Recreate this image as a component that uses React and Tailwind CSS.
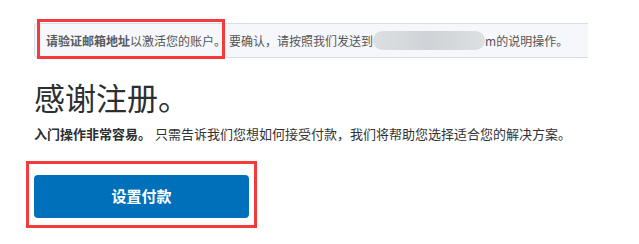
export default function App() {
  return (
    <div
      className="min-h-[244px] w-[639px] bg-white pl-[34px] pt-[23px] text-[#2c2e2f]"
      style={{ fontFamily: '"Noto Sans CJK SC", "Noto Sans", sans-serif' }}
    >
      {/* notice bar */}
      <div className="relative w-[554px]">
        <div className="flex h-[35px] items-center rounded-l-[4px] border border-r-0 border-[#d2e0ea] bg-[#f5f7fa] pl-[11px] text-[12px] leading-[18px] text-[#555]">
          <span className="font-bold text-[#5a5a5a]">请验证邮箱地址</span>
          <span>以激活您的账户。</span>
          <span className="ml-[3px]">要确认，请按照我们发送到</span>
          <span className="inline-block h-[19px] w-[112px] rounded-full bg-gradient-to-r from-[#dde0e3] via-[#cfd2d6] to-[#dde0e3]" />
          <span>m的说明操作。</span>
        </div>
        <div className="pointer-events-none absolute left-[3px] top-[-4px] h-[40px] w-[188px] border-[3px] border-[#f43a3a]" />
      </div>

      <h1 className="mt-[21px] text-[31px] font-normal leading-[36px] text-[#2c2e2f]">
        感谢注册。
      </h1>

      <p className="mt-[10px] text-[13px] leading-[18px] text-[#333]">
        <span className="font-bold text-[#2c2e2f]">入门操作非常容易。</span>
        <span className="ml-[4px]">
          只需告诉我们您想如何接受付款，我们将帮助您选择适合您的解决方案。
        </span>
      </p>

      {/* call to action */}
      <div className="relative mt-[32px] w-[215px]">
        <button
          type="button"
          className="flex h-[43px] w-[215px] items-center justify-center rounded-[4px] bg-[#0070ba] text-[15px] font-bold text-white"
        >
          设置付款
        </button>
        <div className="pointer-events-none absolute left-[-8px] top-[-14px] h-[67px] w-[231px] border-[3px] border-[#f43a3a]" />
      </div>
    </div>
  );
}
